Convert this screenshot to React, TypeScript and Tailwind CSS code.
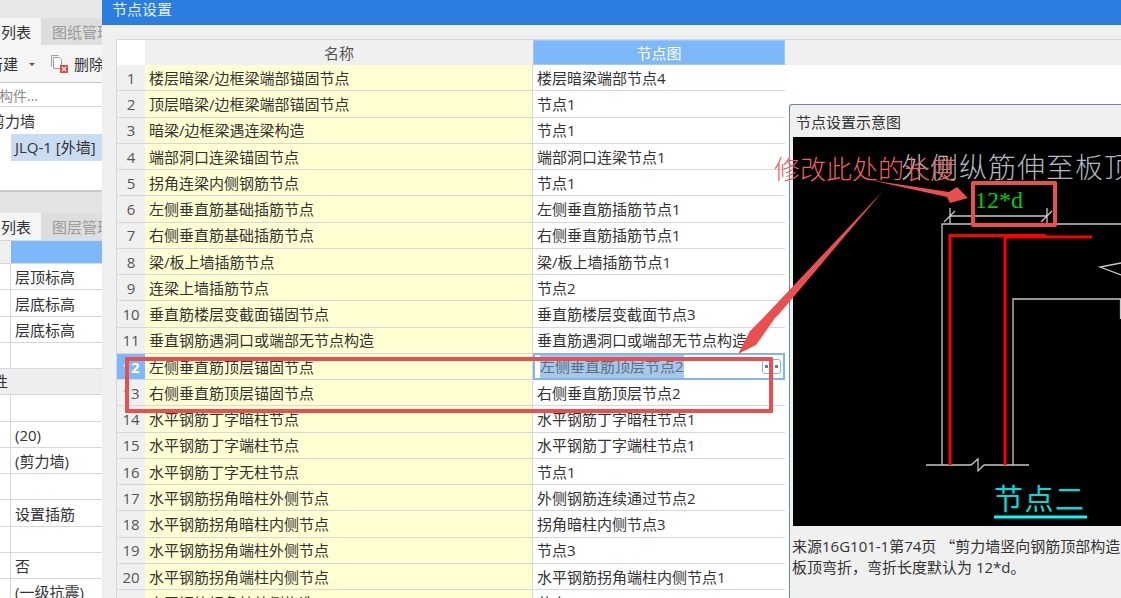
import React from "react";

const rows: [string, string][] = [
  ["楼层暗梁/边框梁端部锚固节点", "楼层暗梁端部节点4"],
  ["顶层暗梁/边框梁端部锚固节点", "节点1"],
  ["暗梁/边框梁遇连梁构造", "节点1"],
  ["端部洞口连梁锚固节点", "端部洞口连梁节点1"],
  ["拐角连梁内侧钢筋节点", "节点1"],
  ["左侧垂直筋基础插筋节点", "左侧垂直筋插筋节点1"],
  ["右侧垂直筋基础插筋节点", "右侧垂直筋插筋节点1"],
  ["梁/板上墙插筋节点", "梁/板上墙插筋节点1"],
  ["连梁上墙插筋节点", "节点2"],
  ["垂直筋楼层变截面锚固节点", "垂直筋楼层变截面节点3"],
  ["垂直钢筋遇洞口或端部无节点构造", "垂直筋遇洞口或端部无节点构造"],
  ["左侧垂直筋顶层锚固节点", "左侧垂直筋顶层节点2"],
  ["右侧垂直筋顶层锚固节点", "右侧垂直筋顶层节点2"],
  ["水平钢筋丁字暗柱节点", "水平钢筋丁字暗柱节点1"],
  ["水平钢筋丁字端柱节点", "水平钢筋丁字端柱节点1"],
  ["水平钢筋丁字无柱节点", "节点1"],
  ["水平钢筋拐角暗柱外侧节点", "外侧钢筋连续通过节点2"],
  ["水平钢筋拐角暗柱内侧节点", "拐角暗柱内侧节点3"],
  ["水平钢筋拐角端柱外侧节点", "节点3"],
  ["水平钢筋拐角端柱内侧节点", "水平钢筋拐角端柱内侧节点1"],
  ["水平钢筋拐角柱外侧构造", "节点1"],
];

const propRows = ["层顶标高", "层底标高", "层底标高", "", "#", "", "(20)", "(剪力墙)", "", "设置插筋", "", "否", "(一级抗震)"];

function Tabs({ second }: { second: string }) {
  return (
    <div className="flex h-[27px] shrink-0 overflow-hidden bg-[#dedede]">
      <div className="flex w-[41px] shrink-0 items-center bg-[#f5f5f5] pt-[1px] pl-[1px] text-[#333]">列表</div>
      <div className="ml-[11px] flex items-center pt-[1px] whitespace-nowrap text-[#9a9a9a]">{second}</div>
    </div>
  );
}

function LeftPanel() {
  return (
    <div className="flex w-[102px] shrink-0 flex-col overflow-hidden bg-[#e4e4e4] text-[#333]">
      <div className="h-[18px] shrink-0 bg-[#e8e8e8]" />
      <Tabs second="图纸管理" />
      <div className="flex h-[38px] shrink-0 items-center border-b border-[#c8c8c8] bg-[#f5f5f5] pt-[1px] whitespace-nowrap">
        <span className="-ml-[12px]">新建</span>
        <span className="ml-[11px] h-0 w-0 border-x-[3px] border-t-[3px] border-x-transparent border-t-[#555]" />
        <svg width="18" height="20" viewBox="0 0 18 20" className="ml-[15px] shrink-0">
          <path d="M3.5 3.5h6l2 2v9h-8z" fill="#fff" stroke="#9aa0a6" />
          <path d="M1.5 12.5v-11h7" fill="none" stroke="#9aa0a6" />
          <rect x="10" y="11" width="8" height="8" fill="#e04a4a" />
          <path d="M12 13l4 4M16 13l-4 4" stroke="#fff" strokeWidth="1.2" />
        </svg>
        <span className="ml-[6px]">删除</span>
      </div>
      <div className="flex h-[24px] shrink-0 items-center border-b border-[#d8d8d8] bg-white pt-[2px] text-[14px] text-[#8a8a8a] whitespace-nowrap">
        <span className="-ml-[1px]">构件...</span>
      </div>
      <div className="h-[85px] shrink-0 border-b-2 border-[#c8c8c8] bg-white whitespace-nowrap">
        <div className="flex h-[27px] items-center pt-[2px]">
          <span className="-ml-[10px]">剪力墙</span>
        </div>
        <div className="ml-[11px] flex h-[27px] items-center bg-[#c9dcf2] pl-[4px]">JLQ-1 [外墙]</div>
      </div>
      <div className="h-[21px] shrink-0 bg-[#e4e4e4]" />
      <Tabs second="图层管理" />
      <div className="flex h-[24px] shrink-0 border-y border-[#d4d7dc]">
        <div className="w-[11px] bg-[#f0f0f0]" />
        <div className="flex-1 bg-[#7db8fb]" />
      </div>
      {propRows.map((t, i) =>
        t === "#" ? (
          <div key={i} className="flex h-[26.25px] shrink-0 items-center overflow-hidden border-b border-[#d4d7dc] bg-[#eeeeee]">
            <span className="-ml-[7px]">性</span>
          </div>
        ) : (
          <div key={i} className="flex h-[26.25px] shrink-0 border-b border-[#d4d7dc] bg-white">
            <div className="w-[11px] shrink-0 border-r border-[#d4d7dc]" />
            <div className="flex items-center pt-[2px] pl-[4px] whitespace-nowrap">{t}</div>
          </div>
        ),
      )}
    </div>
  );
}

function TableRow({ n, name, node }: { n: number; name: string; node: string }) {
  const selected = n === 12;
  return (
    <div className="flex h-[26.25px] shrink-0 border-b border-[#d4d7dc]">
      <div
        className={
          selected
            ? "flex w-[28px] shrink-0 items-center justify-center bg-[#7db8fb] pt-[1px] text-[15px] font-bold text-white"
            : "flex w-[28px] shrink-0 items-center justify-center bg-[#f0f0f0] pt-[1px] text-[15px] text-[#555]"
        }
      >
        {n}
      </div>
      <div className="flex w-[388px] shrink-0 items-center border-r border-[#d4d7dc] bg-[#ffffd2] pt-[1px] pl-[4px] whitespace-nowrap text-[#333]">
        {name}
      </div>
      {selected ? (
        <div className="-mt-[1px] flex h-[27px] flex-1 items-center justify-between border-2 border-[#7db8ea] bg-white pr-[2px] pl-[5px] text-[#5f6f80]">
          <span className="bg-[#a3c8ea] whitespace-nowrap">{node}</span>
          <span className="flex h-[15px] w-[19px] items-center justify-center gap-[2px] rounded-[3px] border border-[#7db8ea]">
            <i className="h-[3px] w-[3px] bg-[#5a7ea8]" />
            <i className="h-[3px] w-[3px] bg-[#5a7ea8]" />
            <i className="h-[3px] w-[3px] bg-[#5a7ea8]" />
          </span>
        </div>
      ) : (
        <div className="flex flex-1 items-center overflow-hidden bg-white pt-[1px] pl-[4px] whitespace-nowrap text-[#333]">{node}</div>
      )}
    </div>
  );
}

function Drawing() {
  const serif = "'Liberation Serif','Noto Sans CJK SC',serif";
  return (
    <svg width="328" height="389" viewBox="793 137 328 389" className="block shrink-0">
      <rect x="793" y="137" width="328" height="389" fill="#000" />
      <text x="901" y="178" fontSize="28" fontWeight="300" fill="#aebabe" fontFamily={serif} letterSpacing="1">
        外侧纵筋伸至板顶
      </text>
      <text x="975" y="208" fontSize="24" fill="#00cc00" fontFamily={serif}>
        12*d
      </text>
      <g stroke="#c8c8c8" strokeWidth="1.3" fill="none">
        <path d="M950 216H1047M950 208V224M1047 208V224M944 222L955 211M1041 222L1052 211" />
        <path d="M942 465V224H1121" />
        <path d="M1013 465V299H1121M1120.5 299V319" />
        <path d="M926 465H971L978 459L978 471L984 465H1029" />
        <path d="M1121 263L1100 267L1121 275" />
      </g>
      <g stroke="#ff0000" fill="none">
        <path d="M950 465V235.5H1046" strokeWidth="3" />
        <path d="M1005 465V237H1092" strokeWidth="3" />
        <path d="M1005 235.5H1046" strokeWidth="3" />
      </g>
      <text x="994" y="510" fontSize="29" fill="#00dcdc" fontFamily={serif} letterSpacing="1.5">
        节点二
      </text>
      <rect x="994" y="515.5" width="93" height="3" fill="#00ffff" />
    </svg>
  );
}

function Annotations() {
  return (
    <>
      <div className="pointer-events-none absolute top-[150px] left-[774px] text-[26px] font-light whitespace-nowrap text-[#ef5f5f]">
        修改此处的长度
      </div>
      <div className="pointer-events-none absolute top-[181px] left-[971px] h-[46px] w-[86px] rounded-[2px] border-[4px] border-[#e94f4f]" />
      <div className="pointer-events-none absolute top-[357px] left-[125px] h-[56px] w-[648px] rounded-[1px] border-[4px] border-[#e94f4f]" />
      <svg width="1121" height="598" viewBox="0 0 1121 598" className="pointer-events-none absolute top-0 left-0">
        <polygon points="870,180 949,192 957,187 968,198 950,203 947,197" fill="#ea4f4f" />
        <polygon points="883,191 780,313 775,318 756,345 738,354 750,331 763,318" fill="#ea4f4f" />
      </svg>
    </>
  );
}

export default function App() {
  return (
    <div className="relative flex h-[598px] w-[1121px] overflow-hidden bg-white font-['Open_Sans','Noto_Sans_CJK_SC',sans-serif] text-[15px]">
      <LeftPanel />
      <div className="flex min-w-0 flex-1 flex-col bg-[#f0f0f0]">
        <div className="flex h-[25px] shrink-0 bg-[#2c7de0] pl-[10px] leading-[18px] text-[#e6f0fc]">节点设置</div>
        <div className="flex min-h-0 flex-1 pt-[14px] pl-[14px]">
          <div className="flex w-[669px] shrink-0 flex-col border-t border-l border-[#d4d7dc]">
            <div className="flex h-[25px] shrink-0">
              <div className="w-[28px] bg-white" />
              <div className="flex w-[388px] items-center justify-center pt-[1px] text-[#555]">名称</div>
              <div className="flex flex-1 items-center justify-center border border-[#9cc9f8] bg-[#7db8fb] pt-[1px] text-white">节点图</div>
            </div>
            {rows.map((r, i) => (
              <TableRow key={i} n={i + 1} name={r[0]} node={r[1]} />
            ))}
          </div>
          <div className="flex min-w-0 flex-1 flex-col border-t border-[#d4d7dc]">
            <div className="h-[25px] shrink-0 bg-[#f0f0f0]" />
            <div className="flex min-h-0 flex-1 flex-col bg-white pt-[39px] pl-[4px]">
              <div className="flex min-h-0 flex-1 flex-col overflow-hidden rounded-tl-[3px] border-t border-l border-[#6a85ad] bg-[#f0f0f0] pl-[3px]">
                <div className="flex h-[32px] shrink-0 items-center pt-[2px] pl-[3px] text-[#333]">节点设置示意图</div>
                <Drawing />
                <div className="-ml-[1px] pt-[9px] leading-[21px] whitespace-nowrap text-[#333]">
                  <div>
                    来源16G101-1第74页 <span className="font-['Noto_Sans_CJK_SC',sans-serif]">“</span>剪力墙竖向钢筋顶部构造
                  </div>
                  <div>板顶弯折，弯折长度默认为 12*d。</div>
                </div>
              </div>
            </div>
          </div>
        </div>
      </div>
      <Annotations />
    </div>
  );
}
